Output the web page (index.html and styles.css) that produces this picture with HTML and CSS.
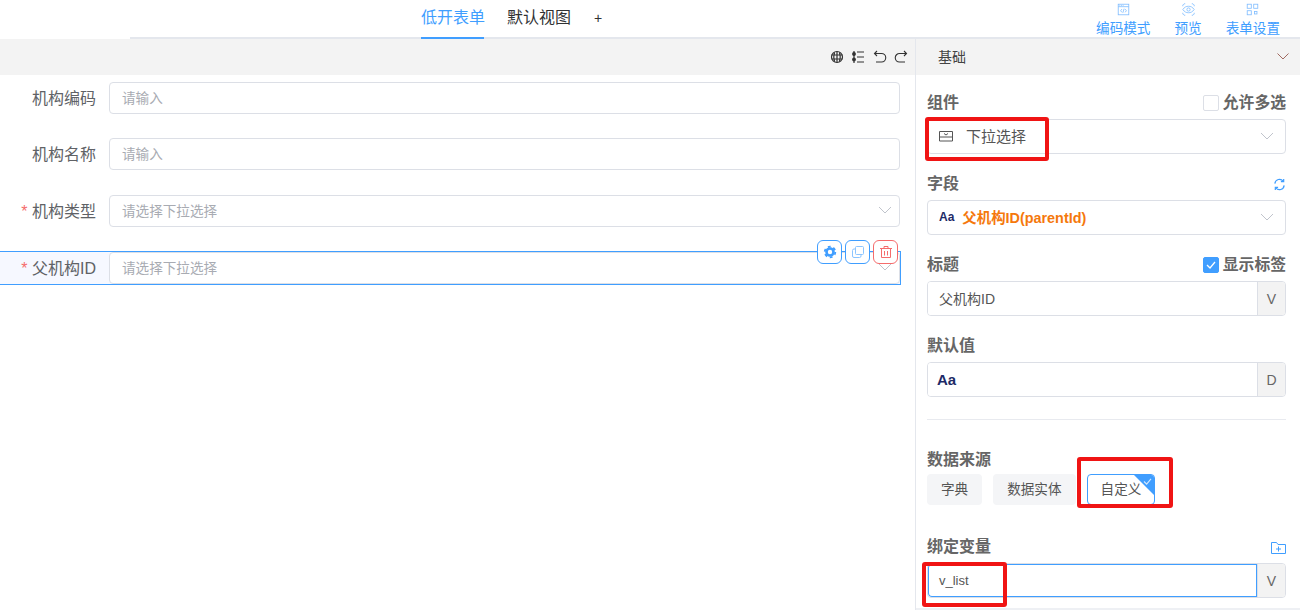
FILE: index.html
```html
<!DOCTYPE html>
<html lang="zh">
<head>
<meta charset="utf-8">
<title>低开表单</title>
<link rel="stylesheet" href="styles.css">
</head>
<body>
<div class="app">
  <header class="topbar">
    <nav class="tabs">
      <span class="tab active">低开表单</span>
      <span class="tab">默认视图</span>
      <span class="tab plus">+</span>
    </nav>
    <div class="actions">
      <div class="action code">
        <svg class="aicon" viewBox="0 0 16 16" fill="none" stroke="currentColor"><rect x="1.500" y="1.500" width="13" height="13"/><path d="M1.500 4.500h13M3 3h1M5 3h1M7 3h1M6 7.500 4.500 9.500 6 11.500M10 7.500l1.500 2-1.500 2M8.800 7l-1.600 5"/></svg>
        <span>编码模式</span>
      </div>
      <div class="action preview">
        <svg class="aicon" viewBox="0 0 16 16" fill="none" stroke="currentColor"><path d="M1 4V2.500L2.500 1H4M12 1h1.500L15 2.500V4M1 12v1.500L2.500 15H4M12 15h1.500l1.500-1.500V12"/><path d="M1 8c2-3 4.300-4 7-4s5 1 7 4c-2 3-4.300 4-7 4s-5-1-7-4z"/><circle cx="8" cy="8" r="2"/></svg>
        <span>预览</span>
      </div>
      <div class="action settings">
        <svg class="aicon" viewBox="0 0 16 16" fill="none" stroke="currentColor"><rect x="1.500" y="1.500" width="5" height="5"/><rect x="9.500" y="1.500" width="5" height="5"/><rect x="1.500" y="9.500" width="5" height="5"/><rect x="10.500" y="10.500" width="3" height="3"/></svg>
        <span>表单设置</span>
      </div>
    </div>
  </header>

  <main class="body">
    <section class="canvas">
      <div class="toolbar">
        <svg class="ticon" viewBox="0 0 14 14" fill="none" stroke="#333" stroke-width="1.200"><circle cx="7" cy="7" r="5.500"/><path d="M1.500 5h11M1.500 9h11M7 1.500v11M4.500 2.500c-1 3-1 6 0 9M9.500 2.500c1 3 1 6 0 9"/></svg>
        <svg class="ticon" viewBox="0 0 14 14" fill="none" stroke="#333" stroke-width="1.200"><path d="M6 2h7M6 7h7M6 12h7M3 1v12"/><circle cx="3" cy="4" r="1.300" fill="#333"/><circle cx="3" cy="9.500" r="1.300" fill="#333"/></svg>
        <svg class="ticon" viewBox="0 0 14 14" fill="none" stroke="#333" stroke-width="1.100"><path d="M4 1 1.500 3.500 4 6M1.500 3.500H8.500a4 4 0 0 1 0 8.500H3"/></svg>
        <svg class="ticon" viewBox="0 0 14 14" fill="none" stroke="#333" stroke-width="1.100"><path d="M10 1l2.500 2.500L10 6M12.500 3.500H5.500a4 4 0 0 0 0 8.500H11"/></svg>
      </div>
      <div class="form">
        <div class="row">
          <label class="label">机构编码</label>
          <div class="control"><span class="ph">请输入</span></div>
        </div>
        <div class="row">
          <label class="label">机构名称</label>
          <div class="control"><span class="ph">请输入</span></div>
        </div>
        <div class="row">
          <label class="label"><i class="req">*</i> 机构类型</label>
          <div class="control"><span class="ph">请选择下拉选择</span>
            <svg class="chev" viewBox="0 0 14 8" fill="none" stroke="currentColor"><path d="M1 1l6 6 6-6"/></svg>
          </div>
        </div>
        <div class="row selected">
          <label class="label"><i class="req">*</i> 父机构ID</label>
          <div class="control"><span class="ph">请选择下拉选择</span>
            <svg class="chev" viewBox="0 0 14 8" fill="none" stroke="currentColor"><path d="M1 1l6 6 6-6"/></svg>
          </div>
          <div class="row-tools">
            <span class="rbtn"><svg viewBox="0 0 14 14" fill="none" stroke="#409eff"><circle cx="7" cy="7" r="3.500" stroke-width="2.600"/><circle cx="7" cy="7" r="5.300" stroke-width="1.800" stroke-dasharray="2.800 2.750"/></svg></span>
            <span class="rbtn"><svg viewBox="0 0 14 14" fill="none" stroke="#8cc5ff"><rect x="4.500" y="1.500" width="8" height="8" rx="1"/><path d="M4.500 4H3a1.500 1.500 0 0 0-1.500 1.500V11A1.500 1.500 0 0 0 3 12.500h5.500A1.500 1.500 0 0 0 10 11V9.500"/></svg></span>
            <span class="rbtn danger"><svg viewBox="0 0 14 14" fill="none" stroke="#f56c6c"><path d="M1 3.500h12M5 3.500V1.500h4v2M2.500 3.500v9h9v-9M5.500 6v4.500M8.500 6v4.500"/></svg></span>
          </div>
        </div>
      </div>
    </section>

    <aside class="panel">
      <div class="panel-head">
        <span>基础</span>
        <svg class="pchev" viewBox="0 0 12 7" fill="none" stroke="#a06a60"><path d="M.5.500 6 6 11.500.500"/></svg>
      </div>
      <div class="panel-body">
        <div class="field f-comp">
          <div class="flabel"><span>组件</span>
            <span class="check"><i class="box"></i>允许多选</span>
          </div>
          <div class="pcontrol">
            <svg class="selicon" viewBox="0 0 14 12" fill="none" stroke="#555"><path d="M.5 7V1.500h13V7M.5 7h13v4H.500zM5 3.500l2 1.500 2-1.500"/></svg>
            <span class="comp-text">下拉选择</span>
            <svg class="chev" viewBox="0 0 14 8" fill="none" stroke="currentColor"><path d="M1 1l6 6 6-6"/></svg>
          </div>
          <div class="mark m-comp"></div>
        </div>
        <div class="field">
          <div class="flabel"><span>字段</span>
            <svg class="refresh" viewBox="0 0 14 14" fill="none" stroke="#409eff" stroke-width="1.300"><path d="M2 6a5 5 0 0 1 9-2.500M12 8a5 5 0 0 1-9 2.500M11.500 1v3H8.500M2.500 13v-3h3"/></svg>
          </div>
          <div class="pcontrol">
            <b class="aa small">Aa</b>
            <b class="fieldname">父机构ID(parentId)</b>
            <svg class="chev" viewBox="0 0 14 8" fill="none" stroke="currentColor"><path d="M1 1l6 6 6-6"/></svg>
          </div>
        </div>
        <div class="field">
          <div class="flabel"><span>标题</span>
            <span class="check"><i class="box on"><svg viewBox="0 0 14 14" fill="none" stroke="#fff" stroke-width="1.300"><path d="M3 7l3 3 5-6"/></svg></i>显示标签</span>
          </div>
          <div class="group">
            <div class="ginput">父机构ID</div>
            <div class="addon">V</div>
          </div>
        </div>
        <div class="field">
          <div class="flabel"><span>默认值</span></div>
          <div class="group">
            <div class="ginput"><b class="aa big">Aa</b></div>
            <div class="addon">D</div>
          </div>
        </div>
        <hr class="divider">
        <div class="field f-source">
          <div class="flabel"><span>数据来源</span></div>
          <div class="segments">
            <span class="seg">字典</span>
            <span class="seg">数据实体</span>
            <span class="seg sel">自定义<i class="corner"></i><svg class="tick" viewBox="0 0 10 8" fill="none" stroke="#cfe6ff" stroke-width="1.300"><path d="M1 4l3 3 5-6"/></svg></span>
          </div>
          <div class="mark m-src"></div>
        </div>
        <div class="field f-var">
          <div class="flabel"><span>绑定变量</span>
            <svg class="folder" viewBox="0 0 15 13" fill="none" stroke="#409eff"><path d="M.5 12.500V1.500h5l1.500 2h7.500v9zM7.500 5.500v5M5 8h5"/></svg>
          </div>
          <div class="group focus">
            <div class="ginput">v_list</div>
            <div class="addon">V</div>
          </div>
          <div class="mark m-var"></div>
        </div>
      </div>
    </aside>
  </main>
</div>
</body>
</html>
```
FILE: styles.css
```css
* { box-sizing: border-box; }
html, body { margin: 0; height: 100%; overflow: hidden; background: #fff; }
body { font-family: "Liberation Sans", "Noto Sans CJK SC", sans-serif; color: #555; font-size: 14px; }
.app { width: 1300px; height: 610px; display: flex; flex-direction: column; }

.topbar { height: 39px; position: relative; display: flex; justify-content: flex-end; background: linear-gradient(#fff 37px, #e4e7ed 37px, #e4e7ed 39px) no-repeat 130px 0 / 100% 39px; }
.tabs { position: absolute; left: 421px; top: 0; height: 39px; display: flex; gap: 23px; }
.tab { width: 63px; height: 39px; text-align: center; font-size: 16px; line-height: 36px; color: #303133; white-space: nowrap; }
.tab.active { color: #409eff; border-bottom: 2px solid #409eff; }
.tab.plus { width: auto; margin-left: 1px; font-size: 14px; }
.actions { display: flex; height: 37px; padding-right: 20px; gap: 24px; }
.action { display: flex; flex-direction: column; align-items: center; color: #409eff; font-size: 13.600px; line-height: 16px; padding-top: 3px; white-space: nowrap; }
.action span { display: block; margin-top: 5px; }
.aicon { width: 15px; height: 15px; display: block; color: #7fbcff; }

.body { flex: 1; display: flex; min-height: 0; }
.canvas { width: 915px; flex: none; }
.toolbar { height: 36px; background: #f3f3f3; display: flex; justify-content: flex-end; align-items: center; gap: 7.300px; padding: 0 7px 0 0; }
.ticon { width: 14px; height: 14px; display: block; }
.form { padding-top: 6.700px; }
.row { height: 56.670px; display: flex; align-items: flex-start; padding: 0 15px 0 0; position: relative; }
.label { width: 96px; flex: none; text-align: right; font-size: 16px; line-height: 34px; color: #606266; white-space: nowrap; }
.req { color: #f56c6c; font-style: normal; }
.control { flex: 1; margin-left: 13px; height: 32px; border: 1px solid #dcdfe6; border-radius: 4px; background: #fff; display: flex; align-items: center; padding: 0 7px 2px 12px; justify-content: space-between; }
.ph { font-size: 13.600px; color: #a8abb2; }
.chev { width: 14px; height: 8px; color: #c0c4cc; flex: none; }
.selected { height: 34px; margin-top: -1px; margin-right: 14px; padding: 0; border: 1px solid #409eff; border-left: 0; background: #f6f8ff; }
.row-tools { position: absolute; right: 2px; top: -12px; display: flex; gap: 3px; }
.rbtn { width: 25px; height: 24px; background: #fff; border: 1px solid #409eff; border-radius: 6px; display: flex; align-items: center; justify-content: center; }
.rbtn svg { width: 14px; height: 14px; display: block; }
.rbtn.danger { border-color: #f56c6c; }

.panel { width: 385px; flex: none; border-left: 1px solid #e4e7ed; display: flex; flex-direction: column; }
.panel-head { height: 36px; flex: none; background: #f3f3f3; display: flex; align-items: center; justify-content: space-between; padding: 0 11px 2px 22px; font-size: 14px; color: #444; }
.pchev { width: 12px; height: 7px; display: block; }
.panel-body { padding: 17px 14px 0 11px; flex: 1; border-bottom: 2px solid #eef0f4; }
.field { position: relative; margin-bottom: 19px; }
.flabel { height: 27px; display: flex; justify-content: space-between; align-items: center; font-size: 16px; font-weight: 700; color: #666; padding-bottom: 5px; line-height: 20px; }
.check { display: flex; align-items: center; gap: 4px; font-size: 15.800px; color: #666; }
.box { width: 16px; height: 16px; border: 1px solid #dcdfe6; border-radius: 2px; display: block; background: #fff; }
.box.on { background: #409eff; border-color: #409eff; }
.box svg { width: 14px; height: 14px; display: block; }
.pcontrol { height: 35px; border: 1px solid #dcdfe6; border-radius: 4px; display: flex; align-items: center; padding: 0 11px 2px 11px; background: #fff; }
.pcontrol .chev { margin-left: auto; }
.selicon { width: 14px; height: 12px; display: block; }
.comp-text { margin-left: 13px; font-size: 15px; color: #555; }
.aa { color: #1d2a66; font-family: "Liberation Sans", sans-serif; font-size: 14px; }
.aa.small { font-size: 12px; }
.aa.big { margin-left: -2px; font-size: 15px; }
.fieldname { margin-left: 8px; font-size: 14.400px; color: #f5780c; }
.group { height: 35px; display: flex; border: 1px solid #dcdfe6; border-radius: 4px; overflow: hidden; }
.ginput { flex: 1; display: flex; align-items: center; padding: 0 0 1px 11px; font-size: 14px; color: #555; background: #fff; }
.addon { width: 28px; flex: none; background: #f3f3f3; border-left: 1px solid #dcdfe6; display: flex; align-items: center; justify-content: center; font-size: 14px; color: #666; }
.group.focus .ginput { box-shadow: inset 0 0 0 1px #409eff; border-radius: 4px 0 0 4px; font-size: 13px; }
.refresh { width: 13px; height: 13px; display: block; margin-bottom: -1px; }
.folder { width: 15px; height: 13px; display: block; }
.divider { border: 0; border-top: 1px solid #e8eaef; margin: 22px 0 0; }
.f-source { margin-top: 28px; margin-bottom: 31px; }
.f-source .flabel { padding-bottom: 3px; }
.segments { display: flex; gap: 11px; margin-top: -1px; }
.seg { height: 31px; padding: 0 14px; line-height: 31px; font-size: 13.600px; background: #f4f5f7; color: #555; border-radius: 4px; position: relative; white-space: nowrap; }
.seg.sel { background: #fff; border: 1px solid #409eff; width: 68px; padding: 0 13px; line-height: 29px; overflow: hidden; }
.corner { position: absolute; right: 0; top: 0; width: 0; height: 0; border-style: solid; border-width: 0 20px 20px 0; border-color: transparent #409eff transparent transparent; }
.tick { position: absolute; right: 2px; top: 3px; width: 9px; height: 7px; }
.f-var { margin-bottom: 0; }
.mark { position: absolute; border: 4px solid #f01414; border-radius: 3px; pointer-events: none; }
.m-comp { left: -2px; top: 25px; width: 124px; height: 44px; }
.m-src { left: 150px; top: 9px; width: 96px; height: 51px; }
.m-var { left: -5px; top: 26px; width: 85px; height: 45px; }
```
